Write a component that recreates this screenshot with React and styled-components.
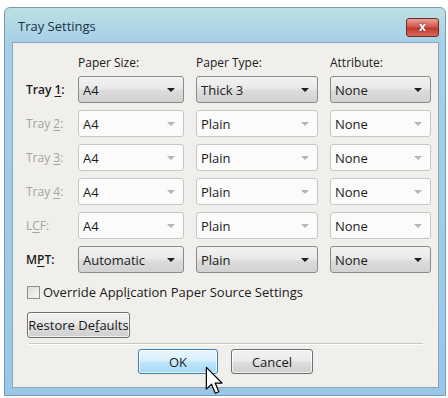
import React from 'react';
import styled, { createGlobalStyle } from 'styled-components';

const Global = createGlobalStyle`
  html, body { margin: 0; padding: 0; background: #ffffff; }
  body { font-family: "Open Sans", "Noto Sans", sans-serif; font-size: 12px; color: #1b1b1b; }
`;

const Page = styled.div`
  width: 448px;
  height: 398px;
  padding: 7px 2px 0 4px;
  box-sizing: border-box;
  overflow: hidden;
`;

const Window = styled.div`
  width: 442px;
  height: 389px;
  box-sizing: border-box;
  border: 1px solid #7c99b0;
  border-radius: 6px 6px 0 0;
  background: linear-gradient(to bottom, #bde0e2 0px, #a6d0e7 34px, #9ac7e8 100%);
  padding: 0 6px 7px 7px;
  display: flex;
  flex-direction: column;
`;

const TitleBar = styled.div`
  height: 34px;
  display: flex;
  align-items: center;
  justify-content: space-between;
  padding: 0 0 0 6px;
`;

const Title = styled.span`
  font-size: 13px;
  color: #1c3147;
  margin-top: 2px;
`;

const CloseButton = styled.div`
  width: 33px;
  height: 19px;
  box-sizing: border-box;
  margin-top: 4px;
  border: 1px solid #6e2b27;
  border-radius: 3px;
  background: linear-gradient(to bottom, #e8a39a 0%, #d4584d 45%, #c23a30 55%, #d5695c 100%);
  display: flex;
  align-items: center;
  justify-content: center;
  color: #ffffff;
  font-weight: 700;
  font-size: 12px;
  line-height: 1;
  text-shadow: 0 0 2px #5a1a16;
`;

const Client = styled.div`
  flex: 1;
  background: #f0efeb;
  border: 1px solid #8aa6bd;
  padding: 13px 0 0 0;
`;

const Grid = styled.div`
  display: grid;
  grid-template-columns: 40px 106px 122px 101px;
  column-gap: 12px;
  row-gap: 7px;
  padding-left: 13px;
  align-items: center;
`;

const Header = styled.div`
  font-size: 12px;
  height: 13px;
  line-height: 13px;
  color: #202020;
`;

const Label = styled.div`
  font-size: 12px;
  white-space: nowrap;
  color: ${({ disabled }) => (disabled ? '#a3a3a3' : '#1a1a1a')};
  font-weight: ${({ disabled }) => (disabled ? 400 : 600)};
  u { text-decoration-thickness: 1px; text-underline-offset: 2px; }
`;

const Combo = styled.div`
  height: 27px;
  box-sizing: border-box;
  border: 1px solid ${({ disabled }) => (disabled ? '#c7c7c7' : '#8b8b8b')};
  border-radius: 3px;
  background: ${({ disabled }) =>
    disabled
      ? '#fbfbfb'
      : 'linear-gradient(to bottom, #f3f3f3 0%, #e9e9e9 45%, #dcdcdc 55%, #d2d2d2 100%)'};
  display: flex;
  align-items: center;
  justify-content: space-between;
  padding: 0 8px 0 4px;
  font-size: 13px;
  color: #1b1b1b;
`;

const Arrow = styled.span`
  width: 0;
  height: 0;
  border-left: 4px solid transparent;
  border-right: 4px solid transparent;
  border-top: 4px solid ${({ disabled }) => (disabled ? '#b5b5b5' : '#1e1e1e')};
`;

const CheckRow = styled.label`
  display: flex;
  align-items: center;
  gap: 3px;
  margin: 10px 0 0 14px;
  font-size: 13px;
  color: #1b1b1b;
`;

const CheckBox = styled.span`
  width: 13px;
  height: 13px;
  box-sizing: border-box;
  border: 1px solid #8e8f8f;
  background: linear-gradient(135deg, #dcdcdc, #f6f6f6);
`;

const Button = styled.div`
  width: ${({ w }) => w}px;
  height: ${({ h }) => h || 25}px;
  box-sizing: border-box;
  border: 1px solid ${({ focused }) => (focused ? '#3c7fb1' : '#707070')};
  border-radius: 3px;
  background: ${({ focused }) =>
    focused
      ? 'linear-gradient(to bottom, #eaf6fd 0%, #d9f0fc 45%, #bee6fd 55%, #a7d9f5 100%)'
      : 'linear-gradient(to bottom, #f2f2f2 0%, #ebebeb 45%, #dddddd 55%, #cfcfcf 100%)'};
  box-shadow: inset 0 0 0 1px rgba(255,255,255,0.7);
  display: flex;
  align-items: center;
  justify-content: center;
  font-size: 13px;
  white-space: nowrap;
  color: #1b1b1b;
`;

const RestoreWrap = styled.div`
  margin: 11px 0 0 14px;
`;

const Separator = styled.div`
  margin: 5px 15px 0 16px;
  height: 1px;
  background: #c9c8c4;
  border-bottom: 1px solid #ffffff;
`;

const ButtonRow = styled.div`
  display: flex;
  justify-content: center;
  gap: 13px;
  margin-top: 4px;
  position: relative;
`;

const Cursor = styled.svg`
  position: absolute;
  left: 192px;
  top: 17px;
`;

const rows = [
  { label: ['Tray ', '1', ':'], size: 'A4', type: 'Thick 3', attr: 'None', disabled: false },
  { label: ['Tray ', '2', ':'], size: 'A4', type: 'Plain', attr: 'None', disabled: true },
  { label: ['Tray ', '3', ':'], size: 'A4', type: 'Plain', attr: 'None', disabled: true },
  { label: ['Tray ', '4', ':'], size: 'A4', type: 'Plain', attr: 'None', disabled: true },
  { label: ['L', 'C', 'F:'], size: 'A4', type: 'Plain', attr: 'None', disabled: true },
  { label: ['M', 'P', 'T:'], size: 'Automatic', type: 'Plain', attr: 'None', disabled: false },
];

const Select = ({ value, disabled }) => (
  <Combo disabled={disabled}>
    <span>{value}</span>
    <Arrow disabled={disabled} />
  </Combo>
);

export default function App() {
  return (
    <Page>
      <Global />
      <Window>
        <TitleBar>
          <Title>Tray Settings</Title>
          <CloseButton>x</CloseButton>
        </TitleBar>
        <Client>
          <Grid>
            <div />
            <Header>Paper Size:</Header>
            <Header>Paper Type:</Header>
            <Header>Attribute:</Header>
            {rows.map((r, i) => (
              <React.Fragment key={i}>
                <Label disabled={r.disabled}>
                  {r.label[0]}
                  <u>{r.label[1]}</u>
                  {r.label[2]}
                </Label>
                <Select value={r.size} disabled={r.disabled} />
                <Select value={r.type} disabled={r.disabled} />
                <Select value={r.attr} disabled={r.disabled} />
              </React.Fragment>
            ))}
          </Grid>
          <CheckRow>
            <CheckBox />
            <span>
              Override Appl<u>i</u>cation Paper Source Settings
            </span>
          </CheckRow>
          <RestoreWrap>
            <Button w={103} h={26}>
              Restore De<u>f</u>aults
            </Button>
          </RestoreWrap>
          <Separator />
          <ButtonRow>
            <Button w={80} focused>
              OK
            </Button>
            <Button w={82}>Cancel</Button>
            <Cursor width="19" height="30" viewBox="0 0 14 22">
              <path
                d="M1 1 L1 17 L4.8 13.4 L7.6 20 L10.2 18.9 L7.5 12.5 L12.5 12.5 Z"
                fill="#ffffff"
                stroke="#000000"
                strokeWidth="0.9"
                strokeLinejoin="round"
              />
            </Cursor>
          </ButtonRow>
        </Client>
      </Window>
    </Page>
  );
}
